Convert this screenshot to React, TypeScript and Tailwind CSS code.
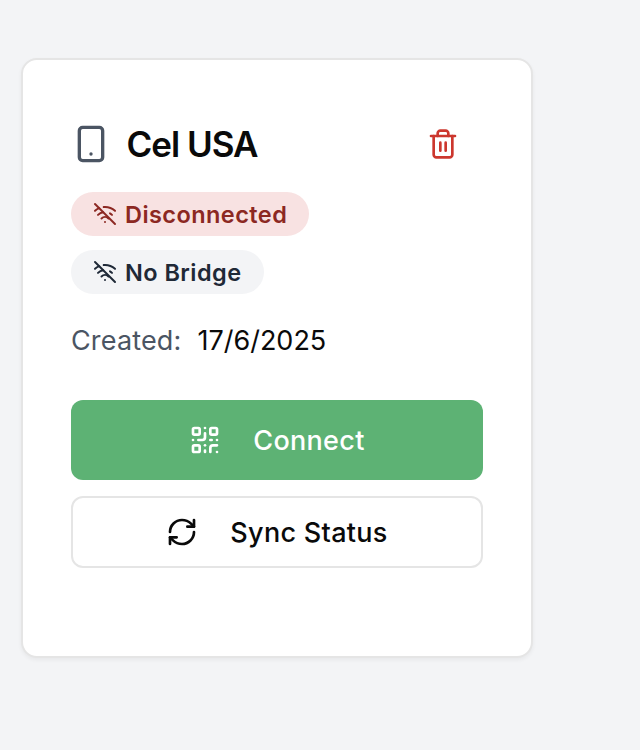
import React from "react";
import { Smartphone, WifiOff, QrCode, RefreshCw } from "lucide-react";

function TrashIcon() {
  return (
    <svg
      className="size-8 text-[#cc372e]"
      viewBox="0 0 24 24"
      fill="none"
      stroke="currentColor"
      strokeWidth="2"
      strokeLinecap="round"
      strokeLinejoin="round"
    >
      <path d="M3 6h18" />
      <path d="M19 6v14c0 1-1 2-2 2H7c-1 0-2-1-2-2V6" />
      <path d="M8 6V4c0-1 1-2 2-2h4c1 0 2 1 2 2v2" />
      <path d="M10 11v6M14 11v6" />
    </svg>
  );
}

export default function App() {
  return (
    <div className="h-[750px] w-[640px] overflow-hidden bg-[#f3f4f6] pt-[58px] pl-[21px] font-['Inter',sans-serif] text-[#0a0a0a]">
      <main className="flex h-[600px] w-[512px] flex-col rounded-2xl border-2 border-[#e5e5e5] bg-white px-12 pt-[60px] shadow-[0_2px_4px_rgba(0,0,0,0.05)]">
        <header className="flex h-12 items-center">
          <Smartphone className="size-10 text-[#4b5563]" strokeWidth={2} />
          <h1 className="ml-[15.5px] text-[35px] leading-12 font-semibold tracking-[-1px]">Cel USA</h1>
          <button className="mr-6 ml-auto"><TrashIcon /></button>
        </header>
        <div className="mt-6 flex flex-col items-start gap-[14px]">
          <span className="flex h-11 w-[238px] items-center gap-2 rounded-full bg-[#f8e2e2] pl-[22px] text-[23.5px] font-semibold tracking-[0.44px] text-[#8c2822]">
            <WifiOff className="size-6 shrink-0" /><span className="pt-0.5">Disconnected</span>
          </span>
          <span className="flex h-11 w-[193px] items-center gap-2 rounded-full bg-[#f3f4f6] pl-[22px] text-[23.5px] font-semibold tracking-[0.44px] text-[#1f2937]">
            <WifiOff className="size-6 shrink-0" /><span className="pt-0.5">No Bridge</span>
          </span>
        </div>
        <p className="mt-[26px] flex h-10 items-center gap-4 pt-0.5 text-[27px]">
          <span className="tracking-[0.15px] text-[#4b5563]">Created:</span><span>17/6/2025</span>
        </p>
        <button className="mt-10 flex h-20 shrink-0 items-center justify-center gap-8 rounded-xl bg-[#5db274] text-[27px] font-medium tracking-[0.3px] text-white">
          <QrCode className="size-8" /><span className="pt-0.5">Connect</span>
        </button>
        <button className="mt-4 flex h-[72px] shrink-0 items-center justify-center gap-8 rounded-xl border-2 border-[#e5e5e5] bg-white text-[27px] font-medium tracking-[0.3px]">
          <RefreshCw className="size-8" /><span className="pt-0.5">Sync Status</span>
        </button>
      </main>
    </div>
  );
}
